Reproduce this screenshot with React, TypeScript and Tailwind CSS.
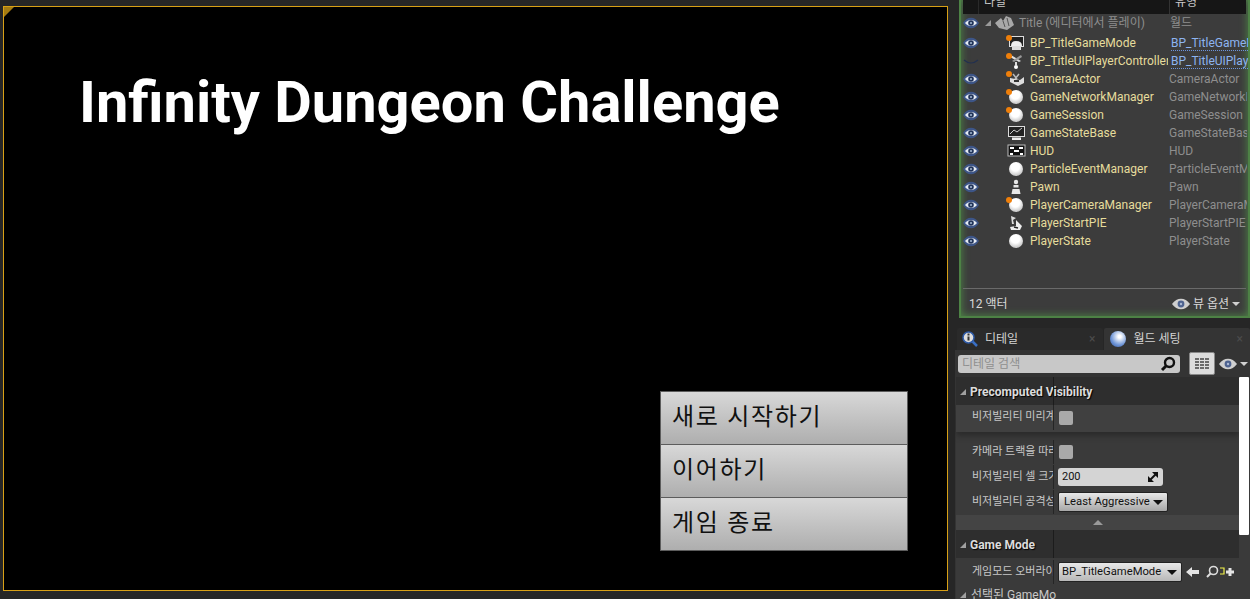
const sans = { fontFamily: 'Roboto, "Noto Sans CJK KR", sans-serif' }

function Eye({ closed = false, light = false, className = '' }: { closed?: boolean; light?: boolean; className?: string }) {
  if (closed) {
    return (
      <svg width="16" height="12" viewBox="0 0 16 12" className={className}>
        <path d="M1 5 Q8 11 15 5" fill="none" stroke="#22304f" strokeWidth="1.2" />
      </svg>
    )
  }
  if (light) {
    return (
      <svg width="18" height="12" viewBox="0 0 18 12" className={className}>
        <path d="M0 6 C5 -1 13 -1 18 6 C13 13 5 13 0 6Z" fill="#cfcfcf" />
        <circle cx="9" cy="6" r="3.4" fill="#4e6390" />
        <circle cx="9" cy="6" r="1.2" fill="#a9b9d4" />
      </svg>
    )
  }
  return (
    <svg width="16" height="12" viewBox="0 0 16 12" className={className}>
      <path d="M0 6 C4 -1 12 -1 16 6 C12 13 4 13 0 6Z" fill="#3d5587" />
      <path d="M2 6 C5 2 11 2 14 6 C11 10 5 10 2 6Z" fill="#e6ebf2" />
      <circle cx="8" cy="6" r="2.8" fill="#22345a" />
      <circle cx="8" cy="6" r="1" fill="#a9bcd6" />
    </svg>
  )
}

function Sphere({ dot = false }: { dot?: boolean }) {
  return (
    <span className="relative block w-[20px] h-[16px]">
      <span className="absolute left-[3px] top-[1px] w-[14px] h-[14px] rounded-full bg-[radial-gradient(circle_at_45%_35%,#ffffff_35%,#a8a8a8_95%)]" />
      {dot && <span className="absolute left-0 top-0 w-[6px] h-[6px] rounded-full bg-[#ef7f0a]" />}
    </span>
  )
}

function ActorIcon({ name }: { name: string }) {
  const dot = name !== 'state' && name !== 'hud' && name !== 'pawn' && name !== 'start'
  return (
    <span className="relative block w-[20px] h-[16px]">
      <svg width="20" height="16" viewBox="0 0 20 16" className="absolute left-0 top-0">
        {name === 'mode' && (
          <g>
            <rect x="3.5" y="1.5" width="14" height="10" fill="#222" stroke="#ddd" />
            <path d="M5 11 Q5 6 10 6 Q16 6 16 11Z" fill="#eee" />
            <rect x="6" y="12" width="9" height="3" fill="#ddd" />
          </g>
        )}
        {name === 'controller' && (
          <g fill="#ddd">
            <path d="M5 2 L15 8 L13 9 L4 4Z" />
            <path d="M15 2 L6 8 L8 9 L16 4Z" fill="#999" />
            <rect x="9" y="9" width="2" height="3" />
            <circle cx="10" cy="14" r="2" fill="#fff" />
          </g>
        )}
        {name === 'camera' && (
          <g>
            <path d="M4 7 L14 9 L18 6 L18 12 L12 15 L4 11Z" fill="#ddd" />
            <path d="M7 3 L11 8 M13 3 L9 8" stroke="#bbb" strokeWidth="1.5" />
            <rect x="8" y="9" width="5" height="2" fill="#333" />
          </g>
        )}
        {name === 'state' && (
          <g>
            <rect x="2.5" y="1.5" width="16" height="10" fill="#222" stroke="#ddd" />
            <path d="M4 9 L8 5 L11 7 L16 3" fill="none" stroke="#ccc" />
            <rect x="6" y="12.5" width="9" height="2.5" fill="#eee" />
          </g>
        )}
        {name === 'hud' && (
          <g>
            <rect x="2" y="2" width="17" height="11" fill="#111" stroke="#bbb" />
            <rect x="4" y="4" width="4" height="2" fill="#fff" />
            <rect x="13" y="4" width="4" height="2" fill="#fff" />
            <rect x="8" y="7" width="5" height="2" fill="#fff" />
            <rect x="4" y="10" width="3" height="2" fill="#fff" />
            <rect x="14" y="10" width="3" height="2" fill="#fff" />
          </g>
        )}
        {name === 'pawn' && (
          <g fill="#e8e8e8">
            <circle cx="10" cy="3" r="2.2" />
            <rect x="7.5" y="6" width="5" height="2.5" />
            <path d="M6.5 10 H13.5 L14.5 15 H5.5Z" />
          </g>
        )}
        {name === 'start' && (
          <g>
            <path d="M5 1 L10 3 L7 5 L8 9 L6 9Z" fill="#ddd" />
            <path d="M10 5 L16 11 L14 15 L5 15 L4 12 L10 11Z" fill="#eee" />
            <path d="M8 12 L12 13" stroke="#222" strokeWidth="1.5" />
          </g>
        )}
      </svg>
      {dot && <span className="absolute left-0 top-0 w-[6px] h-[6px] rounded-full bg-[#ef7f0a]" />}
    </span>
  )
}

const actors = [
  { name: 'BP_TitleGameMode', type: 'BP_TitleGameMode', icon: 'mode', link: true },
  { name: 'BP_TitleUIPlayerController', type: 'BP_TitleUIPlayerController', icon: 'controller', link: true, hidden: true },
  { name: 'CameraActor', type: 'CameraActor', icon: 'camera' },
  { name: 'GameNetworkManager', type: 'GameNetworkManager', icon: 'sphereDot' },
  { name: 'GameSession', type: 'GameSession', icon: 'sphereDot' },
  { name: 'GameStateBase', type: 'GameStateBase', icon: 'state' },
  { name: 'HUD', type: 'HUD', icon: 'hud' },
  { name: 'ParticleEventManager', type: 'ParticleEventManager', icon: 'sphere' },
  { name: 'Pawn', type: 'Pawn', icon: 'pawn' },
  { name: 'PlayerCameraManager', type: 'PlayerCameraManager', icon: 'sphereDot' },
  { name: 'PlayerStartPIE', type: 'PlayerStartPIE', icon: 'start' },
  { name: 'PlayerState', type: 'PlayerState', icon: 'sphere' },
]

function Outliner() {
  return (
    <div className="h-[318px] ml-[4px] border-x-[2px] border-b-[2px] border-[#4d8245] bg-[#3c3c3c] flex flex-col shadow-[inset_0_0_8px_#4f8a47]">
      {/* column header, cut off by the top of the window */}
      <div className="h-[14px] shrink-0 bg-[#161616] flex overflow-hidden text-[12px] text-[#c8c8c8] mx-[2px]">
        <div className="w-[16px] border-r border-[#2a2a2a]" />
        <div className="w-[191px] pl-[5px] -mt-[7px] border-r border-[#333]">타일</div>
        <div className="flex-1 pl-[5px] -mt-[7px]">유형</div>
      </div>
      <div className="h-[20px] pb-[3px] flex items-center text-[12px] pl-[2px]">
        <Eye className="shrink-0" />
        <div className="w-[16px] pl-[6px] shrink-0 text-[#9a9a9a]">
          <span className="block w-0 h-0 border-l-[6px] border-l-transparent border-b-[6px] border-b-[#9a9a9a]" />
        </div>
        <svg width="22" height="16" viewBox="0 0 22 16" className="shrink-0 -ml-[1px]">
          <path d="M1 8 L7 3 L9 6 L12 1 L17 3 L20 10 L13 15 L5 13Z" fill="#a8a8a8" />
          <path d="M9 6 L11 12 M13 3 L15 11" stroke="#555" />
        </svg>
        <span className="ml-[3px] w-[151px] shrink-0 text-[#8e8e8e]">Title (에디터에서 플레이)</span>
        <span className="text-[#8e8e8e]">월드</span>
      </div>
      {actors.map(a => (
        <div key={a.name} className="h-[18px] flex items-center text-[12px] pl-[2px] whitespace-nowrap overflow-hidden">
          <Eye closed={a.hidden} className="shrink-0" />
          <span className="ml-[27px] shrink-0">
            {a.icon === 'sphere' || a.icon === 'sphereDot' ? <Sphere dot={a.icon === 'sphereDot'} /> : <ActorIcon name={a.icon} />}
          </span>
          <span className="ml-[4px] w-[138px] mr-[1px] shrink-0 overflow-hidden text-[#e6dc9c]">{a.name}</span>
          {a.link ? (
            <span className="ml-[2px] w-[78px] overflow-hidden text-[#8db4f0] border-b border-dotted border-[#6d94dc] leading-[14px]">{a.type}</span>
          ) : (
            <span className="w-[78px] overflow-hidden text-[#8e8e8e]">{a.type}</span>
          )}
        </div>
      ))}
      <div className="mt-auto mx-[2px] h-[28px] pt-[2px] border-t border-[#6a6a6a] flex items-center justify-between px-[6px] text-[12px] text-[#d8d8d8]">
        <span>12 액터</span>
        <span className="flex items-center gap-[3px]">
          <Eye light />
          <span>뷰 옵션</span>
          <span className="w-0 h-0 border-x-[4px] border-x-transparent border-t-[4px] border-t-[#d0d0d0]" />
        </span>
      </div>
    </div>
  )
}

function Tab({ label, active, icon }: { label: string; active?: boolean; icon: React.ReactNode }) {
  return (
    <div className={`h-[22px] flex items-center pl-[4px] pr-[7px] rounded-t-[2px] text-[12px] text-[#d4d4d4] ${active ? 'w-[147px] bg-[#343434]' : 'w-[146px] bg-[#2a2a2a]'}`}>
      {icon}
      <span className="ml-[6px] flex-1">{label}</span>
      <span className="text-[#4c4c4c] text-[12px]">×</span>
    </div>
  )
}

function PropRow({ label, children, className = '' }: { label: string; children?: React.ReactNode; className?: string }) {
  return (
    <div className={`flex items-center h-[24px] text-[11px] text-[#c8c8c8] ${className}`}>
      <div className="w-[98px] h-full shrink-0 pl-[16px] overflow-hidden whitespace-nowrap flex items-center border-r border-[#252525]">{label}</div>
      <div className="pl-[4px] flex items-center">{children}</div>
    </div>
  )
}

function Check() {
  return <span className="block ml-[1px] w-[14px] h-[14px] rounded-[2px] bg-[#a9a9a9]" />
}

function SectionHead({ label }: { label: string }) {
  return (
    <div className="relative h-[28px] pt-[1px] flex items-center bg-[#2e2e2e] pl-[4px] text-[12px] font-bold text-[#dcdcdc] [text-shadow:1px_1px_1px_#000]">
      <span className="w-0 h-0 border-l-[6px] border-l-transparent border-b-[6px] border-b-[#a0a0a0] mr-[4px]" />
      {label}
      <span className="absolute left-[97px] top-0 bottom-0 w-px bg-[#1c1c1c]" />
    </div>
  )
}

function Details() {
  return (
    <div className="flex-1 min-h-0 flex flex-col overflow-hidden mt-[10px]" style={sans}>
      <div className="flex gap-[1px] ml-[2px] shrink-0">
        <Tab
          label="디테일"
          icon={
            <svg width="18" height="18" viewBox="0 0 18 18">
              <path d="M11 11 L16 16" stroke="#3a6fc4" strokeWidth="2.5" />
              <circle cx="7.5" cy="7.5" r="5.5" fill="#ddd" stroke="#2f5ba8" strokeWidth="1.5" />
              <rect x="6.5" y="6.5" width="2" height="4" fill="#333" />
              <rect x="6.5" y="3.5" width="2" height="2" fill="#333" />
            </svg>
          }
        />
        <Tab
          active
          label="월드 세팅"
          icon={
            <span className="block w-[16px] h-[16px] rounded-full bg-[radial-gradient(circle_at_60%_35%,#ffffff_10%,#6d94d6_60%,#2e4f96_100%)] mx-[2px]" />
          }
        />
      </div>
      <div className="bg-[#343434] flex-1 min-h-0 flex flex-col">
        <div className="h-[27px] shrink-0 flex items-center pl-[3px]">
          <div className="w-[222px] h-[18px] rounded-[3px] bg-[#c8c8c8] flex items-center justify-between px-[4px] text-[12px] text-[#8f8f8f]">
            <span>디테일 검색</span>
            <svg width="16" height="16" viewBox="0 0 16 16">
              <circle cx="9.5" cy="6.5" r="4.5" fill="none" stroke="#111" strokeWidth="2.4" />
              <path d="M6 10 L2 14" stroke="#111" strokeWidth="3" />
            </svg>
          </div>
          <div className="ml-[9px] w-[26px] h-[23px] rounded-[2px] bg-[#dcdcdc] border border-[#888] flex items-center justify-center">
            <svg width="14" height="12" viewBox="0 0 14 12" fill="#6a6a6a">
              <path d="M0 0h14v2H0zM0 3h14v2H0zM0 6h14v2H0zM0 9h14v2H0z" />
              <path d="M4 0h1v11H4zM9 0h1v11H9z" fill="#dcdcdc" />
            </svg>
          </div>
          <Eye light className="ml-[4px]" />
          <span className="ml-[3px] w-0 h-0 border-x-[4px] border-x-transparent border-t-[4px] border-t-[#d0d0d0]" />
        </div>
        <div className="flex flex-1 min-h-0 overflow-hidden pl-[1px]">
          <div className="flex-1 min-w-0 bg-[#3a3a3a]">
            <SectionHead label="Precomputed Visibility" />
            <PropRow label="비저빌리티 미리계" className="h-[27px] pb-[2px] bg-[#404040] shadow-[0_4px_5px_#2c2c2c]">
              <Check />
            </PropRow>
            <PropRow label="카메라 트랙을 따라" className="mt-[8px]">
              <Check />
            </PropRow>
            <PropRow label="비저빌리티 셀 크기" className="mt-[1px]">
              <div className="w-[105px] h-[18px] rounded-[3px] bg-[#d4d4d4] flex items-center justify-between pl-[4px] pr-[5px] text-[11px] text-[#111]">
                <span>200</span>
                <svg width="10" height="10" viewBox="0 0 10 10" fill="#111">
                  <path d="M0 10 V4 L6 10Z M10 0 V6 L4 0Z" />
                  <path d="M1 9 L9 1" stroke="#111" strokeWidth="2" />
                </svg>
              </div>
            </PropRow>
            <PropRow label="비저빌리티 공격성" className="mt-[1px]">
              <div className="w-[110px] h-[20px] rounded-[2px] bg-gradient-to-b from-[#e8e8e8] to-[#a8a8a8] border border-[#222] flex items-center justify-between pl-[5px] pr-[4px] text-[11.25px] text-[#111]">
                <span>Least Aggressive</span>
                <span className="w-0 h-0 border-x-[5px] border-x-transparent border-t-[5px] border-t-[#111]" />
              </div>
            </PropRow>
            <div className="h-[15px] mt-[1px] bg-[#444] flex items-center justify-center">
              <span className="block w-0 h-0 border-x-[5px] border-x-transparent border-b-[5px] border-b-[#999]" />
            </div>
            <SectionHead label="Game Mode" />
            <PropRow label="게임모드 오버라이드" className="mt-[2px]">
              <div className="w-[124px] h-[20px] rounded-[2px] bg-gradient-to-b from-[#e8e8e8] to-[#b8b8b8] border border-[#222] flex items-center justify-between pl-[3px] pr-[4px] text-[11.25px] text-[#111]">
                <span>BP_TitleGameMode</span>
                <span className="w-0 h-0 border-x-[5px] border-x-transparent border-t-[5px] border-t-[#111]" />
              </div>
              <svg width="14" height="12" viewBox="0 0 14 12" fill="#e4e4e4" className="ml-[4px]">
                <path d="M0 6 L6 1 V4 H13 V8 H6 V11Z" />
              </svg>
              <svg width="14" height="14" viewBox="0 0 14 14" className="ml-[5px]">
                <circle cx="8.5" cy="5.5" r="4" fill="none" stroke="#ddd" strokeWidth="1.6" />
                <path d="M5.5 8.5 L2 12" stroke="#ddd" strokeWidth="2" />
              </svg>
              <svg width="16" height="14" viewBox="0 0 16 14" className="-mr-[4px]">
                <path d="M1 3 H5 V9 H1" fill="none" stroke="#f2f24a" strokeWidth="1.2" />
                <path d="M7 7 H15 M11 3 V11" stroke="#e4e4e4" strokeWidth="3" />
              </svg>
            </PropRow>
            <div className="flex items-center h-[20px] pl-[4px] text-[12px] text-[#c8c8c8] mt-[1px]">
              <span className="w-0 h-0 border-l-[6px] border-l-transparent border-b-[6px] border-b-[#a0a0a0] mr-[5px]" />
              선택된 GameMo
            </div>
          </div>
          <div className="w-[11px] shrink-0 bg-[#3a3a3a] relative">
            <div className="absolute left-0 top-0 w-[10px] h-[158px] bg-white rounded-[1px]" />
          </div>
        </div>
      </div>
    </div>
  )
}

export default function App() {
  return (
    <div className="w-[1250px] h-[599px] overflow-hidden flex bg-[#262626]" style={sans}>
      {/* game viewport */}
      <div className="w-[955px] shrink-0 pl-[3px] pr-[7px] pt-[6px] pb-[8px]">
        <div className="relative h-full bg-black border border-[#d8a016] flex flex-col justify-between">
          <span className="absolute left-0 top-0 w-0 h-0 border-t-[10px] border-r-[10px] border-t-[#a57c12] border-r-transparent" />
          <h1 className="mt-[52px] ml-[75px] text-[57.8px] leading-[86px] font-bold text-white">Infinity Dungeon Challenge</h1>
          <div className="self-end mr-[39px] mb-[40px] w-[248px] flex flex-col">
            {['새로 시작하기', '이어하기', '게임 종료'].map(label => (
              <div key={label} className="h-[54px] pb-[3px] flex items-center pl-[11px] border border-[#5c5c5c] -mb-px bg-gradient-to-b from-[#d8d8d8] to-[#aeaeae] text-[24px] text-[#111] tracking-[1.7px]">
                {label}
              </div>
            ))}
          </div>
        </div>
      </div>
      {/* editor side panels */}
      <div className="flex-1 flex flex-col min-w-0">
        <Outliner />
        <Details />
      </div>
    </div>
  )
}
